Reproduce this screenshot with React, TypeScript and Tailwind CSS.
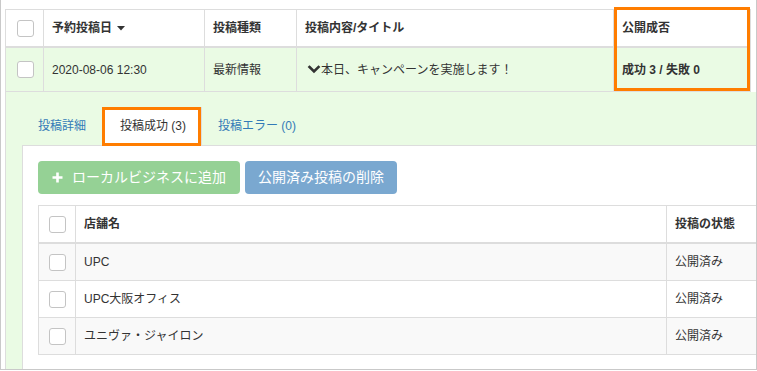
import React from 'react';

const font = { fontFamily: '"Liberation Sans", "Noto Sans CJK JP", sans-serif' };

const Checkbox: React.FC = () => (
  <span className="block w-[17px] h-[17px] rounded-[3px] border border-[#c4c4c4] bg-white" />
);

const SortCaret: React.FC = () => (
  <svg width="8" height="5" viewBox="0 0 8 5" className="ml-[5px] inline-block">
    <path d="M0 0 L8 0 L4 4.5 Z" fill="#333" />
  </svg>
);

const ChevronDown: React.FC = () => (
  <svg width="16" height="10" viewBox="0 0 16 10" className="shrink-0">
    <path d="M4.5 2 L9 6.5 L13.5 2" fill="none" stroke="#333" strokeWidth="2.6" strokeLinecap="square" />
  </svg>
);

const PlusIcon: React.FC = () => (
  <svg width="11" height="11" viewBox="0 0 11 11" className="shrink-0">
    <path d="M5.5 0.5 V10.5 M0.5 5.5 H10.5" stroke="#fff" strokeWidth="2.6" />
  </svg>
);

const stores = [
  { name: 'UPC', status: '公開済み' },
  { name: 'UPC大阪オフィス', status: '公開済み' },
  { name: 'ユニヴァ・ジャイロン', status: '公開済み' },
];

const mainCols = 'grid grid-cols-[38px_161px_92px_317px_137px]';
const subCols = 'grid grid-cols-[37px_591px_120px]';

export default function App() {
  return (
    <div
      style={font}
      className="relative w-[757px] h-[370px] bg-white border-l border-r border-b border-[#c9c9c9] overflow-hidden text-[12px] text-[#333] pt-[9px]"
    >
      {/* main table */}
      <div className="ml-[4px] w-[746px] border-l border-t border-[#ddd]">
        <div className={`${mainCols} h-[38px] border-b-2 border-[#ddd] font-bold`}>
          <div className="flex items-center justify-center border-r border-[#ddd] pl-[1px]">
            <Checkbox />
          </div>
          <div className="flex items-center pl-[8px] border-r border-[#ddd]">
            予約投稿日
            <SortCaret />
          </div>
          <div className="flex items-center pl-[8px] border-r border-[#ddd]">投稿種類</div>
          <div className="flex items-center pl-[8px] border-r border-[#ddd]">投稿内容/タイトル</div>
          <div className="flex items-center pl-[8px] border-r border-[#ddd]">公開成否</div>
        </div>
        <div className={`${mainCols} h-[44px] border-b border-[#ddd] bg-[#eafbe4]`}>
          <div className="flex items-center justify-center border-r border-[#ddd] pl-[1px]">
            <Checkbox />
          </div>
          <div className="flex items-center pl-[8px] border-r border-[#ddd]">2020-08-06 12:30</div>
          <div className="flex items-center pl-[8px] border-r border-[#ddd]">最新情報</div>
          <div className="flex items-center pl-[8px] border-r border-[#ddd]">
            <ChevronDown />
            本日、キャンペーンを実施します！
          </div>
          <div className="flex items-center pl-[8px] border-r border-[#ddd] font-bold">成功 3 / 失敗 0</div>
        </div>
      </div>

      {/* expanded detail row */}
      <div className="ml-[4px] w-[751px] h-[280px] border-l border-[#ddd] bg-[#eafbe4] pt-[15px] pl-[16px]">
        <ul className="flex border-b border-[#ddd] h-[39px]">
          <li className="mr-[2px] h-[38px] px-[16px] pt-[11px] leading-[17px] text-[#337ab7]">投稿詳細</li>
          <li className="mr-[2px] h-[39px] px-[15px] pt-[10px] leading-[17px] bg-white border border-b-0 border-[#ddd]">
            投稿成功 (3)
          </li>
          <li className="h-[38px] pl-[14px] pr-[16px] pt-[11px] leading-[17px] text-[#337ab7]">投稿エラー (0)</li>
        </ul>

        <div className="h-[230px] bg-white border-l border-[#ddd] pt-[15px] pl-[15px]">
          <div className="flex gap-[5px]">
            <button className="flex items-center justify-center gap-[9px] w-[202px] h-[33px] rounded-[4px] bg-[#95d195] text-white text-[14px]">
              <PlusIcon />
              ローカルビジネスに追加
            </button>
            <button className="flex items-center justify-center w-[152px] h-[33px] rounded-[4px] bg-[#7aa8d0] text-white text-[14px]">
              公開済み投稿の削除
            </button>
          </div>

          <div className="mt-[11px] w-[760px] border-l border-t border-[#ddd]">
            <div className={`${subCols} h-[38px] border-b-2 border-[#ddd] font-bold`}>
              <div className="flex items-center justify-center border-r border-[#ddd]">
                <Checkbox />
              </div>
              <div className="flex items-center pl-[8px] border-r border-[#ddd]">店舗名</div>
              <div className="flex items-center pl-[8px]">投稿の状態</div>
            </div>
            {stores.map((s, i) => (
              <div
                key={s.name}
                className={`${subCols} h-[37px] border-b border-[#ddd] ${i % 2 === 0 ? 'bg-[#f9f9f9]' : 'bg-white'}`}
              >
                <div className="flex items-center justify-center border-r border-[#ddd]">
                  <Checkbox />
                </div>
                <div className="flex items-center pl-[8px] border-r border-[#ddd]">{s.name}</div>
                <div className="flex items-center pl-[8px]">{s.status}</div>
              </div>
            ))}
          </div>
        </div>
      </div>

      {/* annotation boxes */}
      <div className="absolute left-[613px] top-[7px] w-[136px] h-[84px] border-[3px] border-[#ff7d00]" />
      <div className="absolute left-[101px] top-[107px] w-[99px] h-[39px] border-[3px] border-[#ff7d00]" />
    </div>
  );
}
